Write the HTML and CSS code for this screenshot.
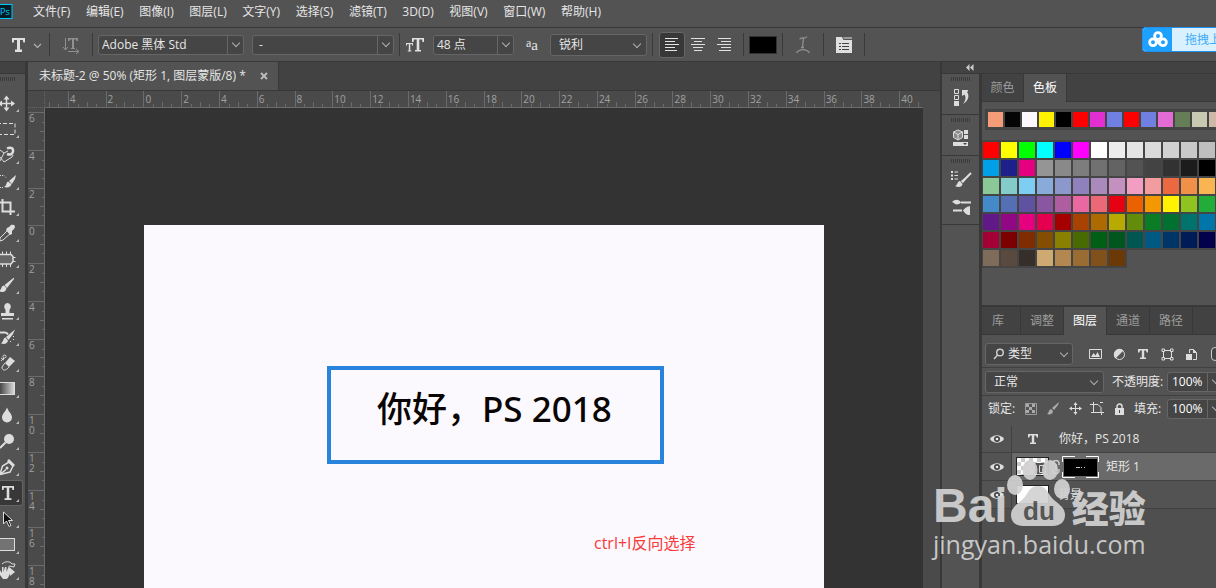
FILE: index.html
```html
<!DOCTYPE html>
<html lang="zh-CN">
<head>
<meta charset="utf-8">
<title>未标题-2</title>
<link rel="stylesheet" href="styles.css">
</head>
<body>
<div class="app">
  <header class="menubar">
    <svg class="logo" width="13" height="16" viewBox="0 0 13 16"><rect x="-6" y=".5" width="18" height="14" fill="#001d26" stroke="#00c8ff"/><text x="0" y="11" font-size="9" fill="#00c8ff" font-family="Open Sans, sans-serif">Ps</text></svg>
    <nav class="menus">
      <button>文件(F)</button><button>编辑(E)</button><button>图像(I)</button><button>图层(L)</button><button>文字(Y)</button><button>选择(S)</button><button>滤镜(T)</button><button>3D(D)</button><button>视图(V)</button><button>窗口(W)</button><button>帮助(H)</button>
    </nav>
  </header>

  <div class="options">
    <button class="preset" aria-label="文字工具"><svg width="40" height="24" viewBox="0 0 40 24"><path d="M3 5h13v4.500h-1.700l-.5-2.500h-2.800v9.500H13V19H6v-2.500h2V7H5.200l-.5 2.500H3z" fill="#e0e0e0"/><path d="M25 11l3.500 3.500L32 11" fill="none" stroke="#b0b0b0" stroke-width="1.200"/></svg></button>
    <i class="sep"></i>
    <button class="orient" aria-label="切换文本取向"><svg width="42" height="24" viewBox="0 0 42 24" fill="none" stroke="#909090"><path d="M15.500 5v12M13 14l2.500 3 2.500-3M18 18.500h11M26 16l3 2.500-3 2.500"/><path d="M18 5h10v3h-1.500l-.5-1.500h-2V15h1v1h-4v-1h1V6.500h-2L19.500 8H18z" fill="#909090" stroke="none"/></svg></button>
    <i class="sep"></i>
    <div class="combo combo-font"><input value="Adobe 黑体 Std" aria-label="字体"><button class="chev" aria-label="字体列表"></button></div>
    <div class="combo combo-style"><input value="-" aria-label="字体样式"><button class="chev" aria-label="样式列表"></button></div>
    <i class="sep"></i>
    <span class="size-icon"><svg width="18" height="14" viewBox="0 0 18 14" fill="#e0e0e0"><path d="M6 0h12v4h-1.500L16 1.500h-2.700V12H15v1.500H9V12h1.700V1.500H8L7.500 4H6z"/><path d="M0 5h7v2.500H6L5.800 6H4.300v6.500h1v1H1.800v-1h1V6H1.200L1 7.500H0z"/></svg></span>
    <div class="combo combo-size"><input value="48 点" aria-label="字号"><button class="chev" aria-label="字号列表"></button></div>
    <span class="aa-icon"><b>a</b><b class="low">a</b></span>
    <label class="pick pick-aa"><select aria-label="消除锯齿"><option>锐利</option></select></label>
    <i class="sep sep-aa"></i>
    <div class="aligns">
      <button class="on" aria-label="左对齐"><svg width="14" height="14" viewBox="0 0 14 14" stroke="#e4e4e4"><path d="M0 .5h13M0 3.500h10M0 6.500h14M0 9.500h10M0 12.500h12"/></svg></button>
      <button aria-label="居中对齐"><svg width="14" height="14" viewBox="0 0 14 14" stroke="#e0e0e0"><path d="M0 .5h14M3 3.500h8M0 6.500h14M2 9.500h10M3 12.500h8"/></svg></button>
      <button aria-label="右对齐"><svg width="14" height="14" viewBox="0 0 14 14" stroke="#e0e0e0"><path d="M1 .5h13M4 3.500h10M0 6.500h14M4 9.500h10M2 12.500h12"/></svg></button>
    </div>
    <i class="sep"></i>
    <button class="ink" aria-label="文本颜色"></button>
    <i class="sep"></i>
    <button class="opt-btn" aria-label="变形文字"><svg width="14" height="18" viewBox="0 0 14 18" fill="none" stroke="#909090" stroke-width="1.300"><path d="M4 3.500c0-2 2-1.500 4-1.500s2 0 3-1.500M7.500 2L6.500 11M5 11.500h3M.5 17c3-4.500 10-4.500 13 0"/></svg></button>
    <i class="sep"></i>
    <button class="opt-btn" aria-label="字符面板"><svg width="16" height="16" viewBox="0 0 16 16"><path d="M0 0h6l1.500 3H16v13H0z" fill="#e0e0e0"/><path d="M7 0h9v2H8z" fill="#999"/><path d="M3 6.500h2M6 6.500h7M3 9.500h2M6 9.500h7M3 12.500h2M6 12.500h7" stroke="#444"/></svg></button>
    <i class="sep"></i>
  </div>

  <main class="work">
    <aside class="tools">
      <div class="strip"></div>
      <div class="grip"></div>
      <button aria-label="移动"><svg viewBox="0 0 24 26"><path d="M6.500 7v13M0 13.500h14" class="l15"/><path d="M3.500 9.500l3-4 3 4zM3.500 17.500l3 4 3-4zM2 10.500l-4 3 4 3zM11 10.500l4 3-4 3z" class="f"/><path d="M19 19v3h-3z" class="c"/></svg></button>
      <button aria-label="选框"><svg viewBox="0 0 24 26"><path d="M-3 7.500h18v11H-3" class="l" stroke-dasharray="4 2"/><path d="M19 19v3h-3z" class="c"/></svg></button>
      <button aria-label="磁性套索"><svg viewBox="0 0 24 26"><path d="M0 8l4 3 4-2M4 11l-4 8M0 15l4 5 8-5 1-2" class="l"/><path d="M7 6.500c4-2 6.500 0 6 3s-3 3.500-6 2.500" fill="none" stroke="#ddd" stroke-width="2.500"/><path d="M19 19v3h-3z" class="c"/></svg></button>
      <button aria-label="快速选择"><svg viewBox="0 0 24 26"><path d="M0 7.500h4l2 2M0 19.500h4" class="l" stroke-dasharray="1 1"/><path d="M16 7l-7 6 3 3 3-5zM8 13.500c-2 1-1 4-4 5.500 4 1 7 0 7.500-3z" class="f"/><path d="M19 19v3h-3z" class="c"/></svg></button>
      <button aria-label="裁剪"><svg viewBox="0 0 24 26"><path d="M2.500 5v12.500H15M0 8.500h10.500V21" class="l2"/><path d="M19 19v3h-3z" class="c"/></svg></button>
      <button aria-label="吸管"><svg viewBox="0 0 24 26"><path d="M8 10L0 18v3l3-1 8-7" class="l"/><path d="M7 8l2-1 2-2c4-1 5 2 3 4l-2 2v3l-2 1-4-5z" class="f"/><path d="M19 19v3h-3z" class="c"/></svg></button>
      <button aria-label="修补"><svg viewBox="0 0 24 26"><path d="M0 8.500h11l2 2v5l-2 2.500H0" fill="#666" stroke="#ddd" stroke-width="1.500"/><path d="M2.500 5.500v3M6.500 5.500v3M10.500 5.500v3M2.500 18v3M6.500 18v3M10.500 18v3M13 11.500h2.500M13 15.500h2.500" class="l"/><path d="M19 19v3h-3z" class="c"/></svg></button>
      <button aria-label="画笔"><svg viewBox="0 0 24 26"><path d="M14 5.500L4.500 13 7 16l7-9zM4 13.500c-3 0-2 4-5 5.500 4 2 7 1 7.500-3z" class="f"/><path d="M19 19v3h-3z" class="c"/></svg></button>
      <button aria-label="图章"><svg viewBox="0 0 24 26"><path d="M7.500 5a3.500 3.500 0 013 5l-1 2v3H14v3H1v-3h4.500v-3l-1-2a3.500 3.500 0 013-5zM2 20h11v1.500H2z" class="f"/><path d="M19 19v3h-3z" class="c"/></svg></button>
      <button aria-label="历史记录画笔"><svg viewBox="0 0 24 26"><path d="M15 5.500L6 13l2.500 3L13 10zM5.500 13.500C3 14 4 17 1 19.500c4 1 6.500 0 7-3z" class="f"/><path d="M0 8.500h5c2 0 2 1 3 2" class="l2"/><path d="M13.500 12v1M13.500 15v1M10.500 17v1" class="l"/><path d="M19 19v3h-3z" class="c"/></svg></button>
      <button aria-label="橡皮擦"><svg viewBox="0 0 24 26"><path d="M10 7l5 4-6 6-4-4z" class="f"/><path d="M5 13l-3 4c0 4 4 4 7 0M1 8l3 2M1 11l3-3" class="l"/><circle cx="4.500" cy="6.500" r="1.500" class="l"/><path d="M19 19v3h-3z" class="c"/></svg></button>
      <button aria-label="渐变"><svg viewBox="0 0 24 26"><defs><linearGradient id="fade"><stop offset="0" stop-color="#333"/><stop offset="1" stop-color="#ddd"/></linearGradient></defs><rect x="-2" y="6.500" width="16.500" height="12" fill="url(#fade)" stroke="#ddd"/><path d="M19 19v3h-3z" class="c"/></svg></button>
      <button aria-label="模糊"><svg viewBox="0 0 24 26"><path d="M7 5.500c2 5 5 6.500 5 10a5 5 0 01-10 0c0-3.500 3-5 5-10z" class="f"/><path d="M19 19v3h-3z" class="c"/></svg></button>
      <button aria-label="减淡"><svg viewBox="0 0 24 26"><circle cx="9" cy="11" r="5" class="f"/><path d="M5.500 14.500L0 20" class="l2"/><path d="M19 19v3h-3z" class="c"/></svg></button>
      <button aria-label="钢笔"><svg viewBox="0 0 24 26"><path d="M0 20l2.500-8L9 8l4 4-3 6-10 2.500 6-5" class="l15"/><path d="M9 5l6 6-2 2-6-6z" class="f"/><circle cx="7" cy="14" r="1.500" class="f"/><path d="M19 19v3h-3z" class="c"/></svg></button>
      <button class="on" aria-label="文字"><svg viewBox="0 0 24 26"><path d="M2 6h12v4h-1.500L12 7.700H9.300v10.500H11.500V20H4.500v-1.800h2.200V7.700H4L3.500 10H2z" class="f"/><path d="M19 19v3h-3z" class="c"/></svg></button>
      <button aria-label="路径选择"><svg viewBox="0 0 24 26"><path d="M3.500 6v12l3-3 2.500 5.500 2-1L8.500 14.500h4z" fill="#111" stroke="#ddd"/><path d="M19 19v3h-3z" class="c"/></svg></button>
      <button aria-label="矩形"><svg viewBox="0 0 24 26"><rect x="-2" y="6.500" width="16.500" height="12" fill="#737373" stroke="#ddd"/><path d="M19 19v3h-3z" class="c"/></svg></button>
      <button aria-label="旋转视图"><svg viewBox="0 0 24 26"><path d="M2 6c3-3 8-3 10 0h3l-1 3-5-1" class="l"/><path d="M8 8l7 6-5 4zM0 12l2 3V9h1.500v5L5 9h1.500v5L8 10h1l.5 6c-1 4-2 5-4 5H3l-3-4z" class="f"/><path d="M19 19v3h-3z" class="c"/></svg></button>
    </aside>

    <section class="doc">
      <div class="tabbar"><div class="tab"><span>未标题-2 @ 50% (矩形 1, 图层蒙版/8) *</span><button class="close" aria-label="关闭"><svg width="8" height="8" viewBox="0 0 8 8"><path d="M1 1l6 6M7 1L1 7" stroke="#bbb" stroke-width="2"/></svg></button></div></div>
      <div class="stage">
        <div class="corner"></div>
        <div class="ruler-h"><div class="track-h" id="rulerH"></div></div>
        <div class="ruler-v"><div class="track-v" id="rulerV"></div></div>
        <div class="canvas">
          <div class="artboard">
            <div class="frame"><span>你好，PS 2018</span></div>
            <p class="note">ctrl+I反向选择</p>
          </div>
        </div>
        <div class="scroll"></div>
      </div>
    </section>

    <div class="right">
      <div class="strip strip-right"><svg width="8" height="7" viewBox="0 0 8 7" fill="#ccc"><path d="M3.500 0v7L0 3.500zM7.500 0v7L4 3.500z"/></svg></div>
      <div class="right-body">
        <div class="dock">
          <div class="dock-group"><div class="grip"></div><button aria-label="历史记录"><svg width="18" height="18" viewBox="0 0 18 18"><path d="M2.500 1.500h4v4h-4zM2.500 7.500h4v4h-4z" fill="none" stroke="#ddd"/><path d="M2 13h5v5H2z" fill="#ddd"/><path d="M10 2h6v1l-1 1c3 4 1 9-4 12 3-4 3-7 1.500-9.500L10 8z" fill="#ddd"/></svg></button></div>
          <div class="dock-group"><div class="grip"></div><button aria-label="属性"><svg width="18" height="18" viewBox="0 0 18 18"><path d="M6 1l4.500 2v5.500L6 11 1.500 8.500V3z" fill="#888" stroke="#ddd"/><path d="M1.500 3L6 5.500 10.500 3M6 5.500V11" fill="none" stroke="#ddd"/><path d="M12 1h4v4h-4zM12 6h4v4h-4zM1 13h15v4H1z" fill="#ddd"/><path d="M11 14h4l-2 2z" fill="#444"/></svg></button></div>
          <div class="dock-group"><div class="grip"></div><button aria-label="画笔设置"><svg width="22" height="18" viewBox="0 0 22 18"><path d="M1 1h2v2H1zM1 4.500h2v2H1zM1 8h2v2H1z" fill="#ddd"/><path d="M4.500 2H8M4.500 5.500H8M4.500 9H8" stroke="#ddd"/><path d="M21 3l-10 8 2 2zM10 11c-3 0-2 4-5 5 4 2 7 1 7.500-2z" fill="#ddd"/><path d="M21 3l-9 9" stroke="#ddd" stroke-width="2"/></svg></button><button aria-label="画笔预设"><svg width="22" height="18" viewBox="0 0 22 18" fill="#ddd"><path d="M11 3.500h10v2H11zM2 4c3-3 7-3 9 .5C9 7 5 7 4 5zM3 11.500h9v2H3zM20 8v9c-4 0-5-2-7-4.500C15 10 16 9 20 8z"/></svg></button></div>
        </div>
        <div class="panels">
          <section class="panel swatch-panel">
            <div class="ptabs"><button>颜色</button><button class="on">色板</button></div>
            <div class="recent" id="recent"></div>
            <div class="swatches" id="swatches"></div>
          </section>
          <section class="panel layers-panel">
            <div class="ptabs"><button>库</button><button>调整</button><button class="on">图层</button><button>通道</button><button>路径</button></div>
            <div class="prow">
              <label class="pick pick-kind"><svg width="12" height="12" viewBox="0 0 12 12" fill="none" stroke="#ccc" stroke-width="1.500"><circle cx="7" cy="4.500" r="3.300"/><path d="M4.500 7L1 11"/></svg><select aria-label="过滤类型"><option>类型</option></select></label>
              <div class="filters">
                <button aria-label="像素图层"><svg width="13" height="13" viewBox="0 0 13 13"><path d="M.5 1.500h12v9H.5z" fill="none" stroke="#ddd"/><path d="M2 9l2.500-4 2 2.500L8.500 4 11 9z" fill="#ddd"/></svg></button>
                <button aria-label="调整图层"><svg width="13" height="13" viewBox="0 0 13 13"><circle cx="6.500" cy="6.500" r="5" fill="none" stroke="#ddd"/><path d="M2.500 10.500A5.500 5.500 0 0110.500 2.500z" fill="#ddd"/></svg></button>
                <button aria-label="文字图层"><svg width="12" height="12" viewBox="0 0 12 12"><path d="M1 1h10v3.500H9.700L9 2.500H7.200v7H9V11H3V9.500h1.800v-7H3L2.300 4.500H1z" fill="#ddd"/></svg></button>
                <button aria-label="形状图层"><svg width="13" height="13" viewBox="0 0 13 13" fill="#535353" stroke="#ddd"><path d="M2.500 2.500h8v8h-8z"/><path d="M1 1h2.500v2.500H1zM9.500 1H12v2.500H9.500zM1 9.500h2.500V12H1zM9.500 9.500H12V12H9.500z"/></svg></button>
                <button aria-label="智能对象"><svg width="13" height="13" viewBox="0 0 13 13"><path d="M4.500 5V1.500h4l3 3v7H8" fill="none" stroke="#ddd"/><path d="M1 6h6v6H1zM8 1v4h4z" fill="#ddd"/></svg></button>
                <button aria-label="过滤开关"><i class="toggle"></i></button>
              </div>
            </div>
            <div class="prow">
              <label class="pick pick-blend"><select aria-label="混合模式"><option>正常</option></select></label>
              <label class="plabel" for="opacity">不透明度:</label>
              <div class="combo combo-pct"><input id="opacity" value="100%"><button class="chev" aria-label="不透明度滑块"></button></div>
            </div>
            <div class="prow prow-lock">
              <span class="lock-label">锁定:</span>
              <div class="locks">
                <button aria-label="锁定透明像素"><svg width="12" height="12" viewBox="0 0 12 12"><path d="M.5.500h11v11H.5z" fill="#555" stroke="#999"/><path d="M1 1h3v3H1zM7 1h3v3H7zM4 4h3v3H4zM1 7h3v3H1zM7 7h3v3H7z" fill="#aaa"/></svg></button>
                <button aria-label="锁定图像像素"><svg width="14" height="13" viewBox="0 0 14 13" fill="#aaa"><path d="M13 0L6 6l2 2 4-5zM5 7c-2 0-2 4-4 5 3 1 6 0 6-3z"/></svg></button>
                <button aria-label="锁定位置"><svg width="13" height="13" viewBox="0 0 13 13"><path d="M6.500 1v11M1 6.500h11" stroke="#ddd"/><path d="M4.500 3l2-3 2 3zM4.500 10l2 3 2-3zM3 4.500l-3 2 3 2zM10 4.500l3 2-3 2z" fill="#ddd"/></svg></button>
                <button aria-label="防止嵌套"><svg width="14" height="13" viewBox="0 0 14 13" fill="none" stroke="#ddd"><path d="M3.500 0v11M0 2.500h8l3 3V11M1 10.500h13M11.500 10v3M10 .5h3"/></svg></button>
                <button aria-label="全部锁定"><svg width="11" height="12" viewBox="0 0 11 12"><path d="M3 6V3.500a2.500 2.500 0 015 0V6" fill="none" stroke="#ddd" stroke-width="1.500"/><path d="M1 5h9v7H1z" fill="#ddd"/><path d="M5 7h1v3H5z" fill="#444"/></svg></button>
              </div>
              <label class="plabel" for="fill">填充:</label>
              <div class="combo combo-pct"><input id="fill" value="100%"><button class="chev" aria-label="填充滑块"></button></div>
            </div>
            <div class="layers">
              <div class="layer">
                <button class="eye" aria-label="可见性"><svg width="14" height="10" viewBox="0 0 14 10"><path d="M0 5c3-5 11-5 14 0-3 5-11 5-14 0z" fill="#ddd"/><circle cx="7" cy="5" r="3" fill="#444"/><circle cx="7" cy="5" r="1.300" fill="#eee"/></svg></button>
                <div class="lbody"><span class="ticon"><svg width="12" height="12" viewBox="0 0 12 12"><path d="M1 1h10v3.500H9.700L9 2.500H7.200v7H9V11H3V9.500h1.800v-7H3L2.300 4.500H1z" fill="#ddd"/></svg></span><span>你好，PS 2018</span></div>
              </div>
              <div class="layer active">
                <button class="eye" aria-label="可见性"><svg width="14" height="10" viewBox="0 0 14 10"><path d="M0 5c3-5 11-5 14 0-3 5-11 5-14 0z" fill="#ddd"/><circle cx="7" cy="5" r="3" fill="#444"/><circle cx="7" cy="5" r="1.300" fill="#eee"/></svg></button>
                <div class="lbody"><span class="thumb checker"><svg width="31" height="16" viewBox="0 0 31 16"><path d="M8 8h9v4H8z" fill="#fbd9c8"/><path d="M18 5h13v11H18z" fill="#555"/><path d="M22.500 7.500h6v7h-6z" fill="none" stroke="#ddd"/></svg></span><span class="chain"><svg width="8" height="14" viewBox="0 0 8 14" fill="none" stroke="#ccc" stroke-width="1.500"><path d="M1 5V3a3 2.500 0 016 0v2M1 9v2a3 2.500 0 006 0V9M4 4v6"/></svg></span><span class="mask"><svg width="37" height="24" viewBox="0 0 37 24"><path d="M2 4h33v17H2z" fill="#000"/><path d="M.5 7V1.500H13M24 1.500h12.500V7M36.500 17v5.500H24M13 22.500H.5V17" fill="none" stroke="#fff"/><path d="M14 12.500h4M19 12.500h1M22 12.500h1" stroke="#ccc"/></svg></span><span>矩形 1</span></div>
              </div>
              <div class="layer">
                <button class="eye" aria-label="可见性"><svg width="14" height="10" viewBox="0 0 14 10"><path d="M0 5c3-5 11-5 14 0-3 5-11 5-14 0z" fill="#ddd"/><circle cx="7" cy="5" r="3" fill="#444"/><circle cx="7" cy="5" r="1.300" fill="#eee"/></svg></button>
                <div class="lbody"><span class="thumb"></span><span class="bgname">背景</span></div>
              </div>
            </div>
          </section>
        </div>
      </div>
    </div>
  </main>

  <div class="upload">
    <span class="cloud"><svg width="20" height="17" viewBox="0 0 20 17" fill="none" stroke="#fff" stroke-width="2.800"><circle cx="10" cy="5" r="3.400"/><circle cx="5" cy="11.300" r="3.400"/><circle cx="15" cy="11.300" r="3.400"/><path d="M7.500 9l5 4.500"/></svg></span>
    <span class="drop">拖拽上传</span>
  </div>

  <div class="watermark">
    <div class="wm-top"><span class="wm-bai">Bai</span><svg class="paw" width="66" height="66" viewBox="0 0 66 66"><g fill="#d2d2d2"><ellipse cx="10" cy="25" rx="8" ry="10"/><ellipse cx="25" cy="10" rx="7.500" ry="10"/><ellipse cx="45" cy="10" rx="8" ry="10"/><ellipse cx="57" cy="29" rx="8" ry="10"/><path d="M33 26c8 0 9 6 14 12 6 6 13 9 13 17 0 7-5 11-12 11H18C11 66 6 62 6 55c0-8 7-11 13-17 5-6 6-12 14-12z"/></g><text x="34" y="60" text-anchor="middle" font-size="26" font-weight="700" font-family="Liberation Sans, sans-serif" fill="#575757">du</text></svg><span class="wm-cn">经验</span></div>
    <div class="wm-url">jingyan.baidu.com</div>
  </div>
</div>
<script src="main.js"></script>
</body>
</html>
```

FILE: styles.css
```css
* { box-sizing: border-box; }
body {
  margin: 0;
  overflow: hidden;
  background: #535353;
  color: #e6e6e6;
  font: 12px/16px "Open Sans", "Noto Sans CJK SC", sans-serif;
}
button, input, select {
  margin: 0;
  padding: 0;
  border: 0;
  border-radius: 0;
  background: none;
  color: inherit;
  font: inherit;
  outline: 0;
}
svg { display: block; flex: none; }
.app { position: relative; display: flex; flex-direction: column; height: 100vh; overflow: hidden; }

/* menu bar */
.menubar { display: flex; align-items: center; gap: 20px; flex: none; height: 28px; padding-bottom: 4px; border-bottom: 1px solid #383838; }
.menus { display: flex; justify-content: space-between; width: 568px; white-space: nowrap; }

/* options bar */
.options { display: flex; align-items: center; flex: none; height: 34px; padding-left: 9px; border-bottom: 1px solid #383838; }
.options > * { flex: none; }
.sep { width: 1px; height: 23px; background: #3a3a3a; }
.combo { display: flex; height: 20px; border: 1px solid #666; border-radius: 3px; background: #454545; }
.combo input { flex: 1; min-width: 0; padding-left: 3px; }
.chev { flex: none; width: 16px; border-left: 1px solid #666; }
.chev::after, .pick::after { content: ""; display: block; width: 5px; height: 5px; border: solid #b0b0b0; border-width: 0 1px 1px 0; transform: rotate(45deg); }
.chev::after { margin: -3px auto 0; }
.combo-font { width: 146px; margin: 0 8px 0 5px; }
.combo-style { width: 142px; margin-right: 5px; }
.combo-style input { padding-left: 6px; }
.combo-size { width: 81px; }
.size-icon { width: 33px; padding-left: 6px; }
.aa-icon { display: flex; width: 36px; height: 16px; padding-left: 12px; }
.aa-icon b { font: 12px/12px "Liberation Serif", serif; }
.aa-icon .low { padding-top: 2px; font-size: 15px; }
.pick { display: flex; align-items: center; height: 22px; padding: 0 6px 0 8px; border: 1px solid #666; border-radius: 3px; background: #454545; }
.pick select { flex: 1; min-width: 0; appearance: none; }
.pick::after { flex: none; margin-top: -2px; }
.pick-aa { width: 97px; margin-right: 5px; }
.sep-aa { margin-right: 6px; }
.aligns { display: flex; margin-right: 6px; }
.aligns button { display: grid; place-items: center; width: 26px; height: 26px; }
.aligns .on { border: 1px solid #666; border-radius: 3px; background: #383838; }
.ink { width: 28px; height: 18px; margin: 0 5px; border: 1px solid #333; background: #000; }
.opt-btn { display: grid; place-items: center; width: 40px; height: 24px; }

/* work area */
.work { display: flex; flex: 1; min-height: 0; background: #383838; }
.strip { flex: none; height: 12px; border-bottom: 1px solid #383838; background: #424242; }
.grip { height: 16px; background: repeating-linear-gradient(90deg, #3c3c3c 0 1px, transparent 1px 2px) 0 3px / 16px 4px no-repeat; }
.tools { display: flex; flex-direction: column; flex: none; width: 25px; margin-right: 3px; background: #535353; }
.tools button { flex: none; width: 23px; height: 26px; overflow: hidden; }
.tools .on { border: solid #646464; border-width: 1px 1px 1px 0; border-radius: 0 3px 3px 0; background: #383838; }
.tools svg { width: 24px; height: 26px; }
.tools .on svg { margin-top: -1px; }
.f { fill: #ddd; }
.c { fill: #bbb; }
.l { fill: none; stroke: #ddd; }
.l15 { fill: none; stroke: #ddd; stroke-width: 1.5; }
.l2 { fill: none; stroke: #ddd; stroke-width: 2; }

/* document */
.doc { display: flex; flex: 1; flex-direction: column; min-width: 0; }
.tabbar { display: flex; flex: none; height: 29px; border-bottom: 1px solid #383838; background: #424242; }
.tab { display: flex; align-items: center; justify-content: space-between; min-width: 251px; padding: 0 10px 0 11px; border-right: 1px solid #383838; background: #535353; white-space: nowrap; }
.stage { display: grid; flex: 1; grid-template: 17px minmax(0, 1fr) / 17px minmax(0, 1fr) 17px; min-height: 0; }
.corner { border: dotted #666; border-width: 0 1px 1px 0; background: #4a4a4a; }
.ruler-h { grid-column: 2; overflow: hidden; border-bottom: 1px solid #6b6b6b; background: #4a4a4a; }
.ruler-v { grid-area: 2 / 1; overflow: hidden; border-right: 1px solid #6b6b6b; background: #4a4a4a; }
.canvas { grid-area: 2 / 2; overflow: hidden; background: #333; }
.scroll { grid-area: 1 / 3 / 3 / 4; background: #4a4a4a; }
.track-h { display: grid; grid-template-columns: repeat(24, 1fr); width: 907px; height: 16px; margin-left: -15px; }
.track-v { display: grid; grid-template-rows: repeat(13, 1fr); height: 491px; margin-top: 4px; }
.track-h span, .track-v span { color: #a0a0a0; font-size: 10px; line-height: 10px; }
.track-h span {
  padding: 3px 0 0 1px;
  border-left: 1px solid #6b6b6b;
  background:
    linear-gradient(#6b6b6b, #6b6b6b) 25% 100% / 1px 3px no-repeat,
    linear-gradient(#6b6b6b, #6b6b6b) 50% 100% / 1px 5px no-repeat,
    linear-gradient(#6b6b6b, #6b6b6b) 75% 100% / 1px 3px no-repeat;
}
.track-v span {
  padding: 0 10px 0 1px;
  border-top: 1px solid #6b6b6b;
  word-break: break-all;
  background:
    linear-gradient(#6b6b6b, #6b6b6b) 100% 25% / 3px 1px no-repeat,
    linear-gradient(#6b6b6b, #6b6b6b) 100% 50% / 5px 1px no-repeat,
    linear-gradient(#6b6b6b, #6b6b6b) 100% 75% / 3px 1px no-repeat;
}
.artboard { width: 680px; height: 100%; margin: 117px 0 0 99px; padding-top: 141px; background: #fbf9fd; }
.frame { width: 337px; height: 98px; margin-left: 183px; padding: 14px 0 0 46px; border: 4px solid #2783dc; color: #0a0505; font: 500 35px/50px "Noto Sans", "Noto Sans CJK SC", sans-serif; white-space: nowrap; }
.note { margin: 69px 0 0 450px; color: #f93a3a; font-size: 16px; line-height: 20px; }

/* right side */
.right { display: flex; flex: none; flex-direction: column; width: 274px; margin-left: 2px; }
.strip-right { padding: 2px 0 0 24px; }
.right-body { display: flex; flex: 1; gap: 3px; min-height: 0; }
.dock { width: 37px; background: #535353; }
.dock-group { padding-bottom: 6px; border-bottom: 1px solid #383838; }
.dock-group .grip { height: 12px; margin-left: 9px; background-size: 20px 4px; }
.dock-group button { display: grid; place-items: center; width: 37px; height: 22px; }
.dock-group button + button { margin-top: 6px; }
.panels { display: flex; flex: 1; flex-direction: column; min-width: 0; gap: 2px; }
.panel { overflow: hidden; background: #535353; }
.swatch-panel { flex: none; height: 231px; }
.layers-panel { flex: 1; background: #4f4f4f; }
.ptabs { display: flex; height: 28px; background: #383838; box-shadow: inset 0 -1px #383838; }
.ptabs::after { content: ""; flex: 1; border-bottom: 1px solid #383838; background: #424242; }
.ptabs button { width: 42px; margin-right: 1px; border-bottom: 1px solid #383838; background: #424242; color: #9c9c9c; }
.ptabs button:first-child { width: 41px; }
.layers-panel .ptabs button:first-child { width: 38px; padding-right: 6px; }
.ptabs .on { border-bottom: 0; background: #535353; color: #fff; }
.recent { display: flex; gap: 2px; width: 100%; margin: 7px 0 12px 3px; padding: 2px; border: 1px solid #424242; background: #454545; overflow: hidden; }
.recent i { flex: none; width: 15px; height: 15px; }
.swatches { display: grid; grid-template-columns: repeat(13, 16px); gap: 2px; padding: 0 1px; }
.swatches i { height: 16px; box-shadow: 0 0 0 2px #454545; }
.prow { display: flex; align-items: center; height: 28px; padding-left: 3px; border-bottom: 1px solid #404040; background: #535353; white-space: nowrap; }
.prow > * { flex: none; }
.ptabs + .prow { height: 33px; padding-top: 6px; }
.pick-kind { gap: 3px; width: 88px; padding: 0 5px 0 7px; }
.filters, .locks { display: flex; }
.filters { margin-left: 10px; }
.filters button { display: grid; place-items: center; width: 24px; height: 20px; }
.toggle { width: 8px; height: 14px; border: 1px solid #ccc; border-radius: 4px; background: #444; }
.pick-blend { width: 119px; }
.plabel { width: 55px; margin-left: 8px; }
.combo-pct { width: 57px; }
.combo-pct input { padding-left: 4px; color: #fff; }
.prow-lock { height: 30px; padding-bottom: 5px; border-bottom: 0; }
.lock-label { width: 35px; padding-left: 3px; }
.locks button { display: grid; place-items: center; width: 22px; height: 20px; }
.prow-lock .plabel { width: 33px; margin-left: 4px; }
.layer { display: flex; height: 28px; border-bottom: 1px solid #424242; background: #535353; }
.layer:first-child { height: 27px; }
.eye { display: grid; place-items: center; width: 30px; border-right: 1px solid #404040; }
.lbody { display: flex; flex: 1; align-items: center; padding-left: 4px; white-space: nowrap; }
.active .lbody { background: #6a6a6a; }
.ticon { width: 43px; padding-left: 11px; }
.thumb { width: 33px; height: 19px; border: 1px solid #222; background: #fff; }
.checker { background: repeating-conic-gradient(#ccc 0 25%, #fff 0 50%) 0 0 / 8px 8px; }
.chain { padding: 0 2px 0 3px; }
.mask { margin-right: 7px; }
.bgname { padding-left: 9px; }

/* floating pieces */
.upload { position: absolute; top: 27px; right: 0; display: flex; width: 74px; height: 25px; border: 1px solid #1e90f0; border-right: 0; border-radius: 4px 0 0 4px; overflow: hidden; background: #d9f1fe; }
.cloud { display: grid; flex: none; place-items: center; width: 29px; background: #1ea0ff; }
.drop { padding-left: 13px; color: #41abf5; font-size: 12px; line-height: 23px; white-space: nowrap; }
.watermark { position: absolute; top: 460px; left: 933px; color: #d2d2d2; opacity: .92; white-space: nowrap; }
.wm-top { display: flex; align-items: flex-end; height: 66px; }
.wm-bai { font: 700 48px/40px "Liberation Sans", sans-serif; }
.paw { margin: 0 1px 0 -3px; }
.wm-cn { font: 900 37px/38px "Noto Sans CJK SC", sans-serif; }
.wm-url { font: 25px/36px "Open Sans", sans-serif; }
```

FILE: main.js
```js
function fill(id, items, make) {
  const host = document.getElementById(id);
  items.forEach(function (item) { host.appendChild(make(item)); });
}
function label(value) {
  const el = document.createElement('span');
  el.textContent = value;
  return el;
}
function chip(color) {
  const el = document.createElement('i');
  el.style.background = '#' + color;
  return el;
}

const across = [''];
for (let n = -4; n <= 40; n += 2) across.push(Math.abs(n));
fill('rulerH', across, label);

const down = [];
for (let n = -6; n <= 18; n += 2) down.push(Math.abs(n));
fill('rulerV', down, label);

fill('recent', 'f49b78 050505 fbf9fd fff100 000000 ff0000 e22fd0 7080e0 ff0000 7080e0 e26bd6 657e58 c7cab0 cdb8a8'.split(' '), chip);

fill('swatches', (
  'ff0000 ffff00 00ff00 00ffff 0000ff ff00ff ffffff ededed e4e4e4 dadada d1d1d1 c8c8c8 bebebe ' +
  '00a0e9 1d2088 e4007f 959595 898989 7d7d7d 717171 636363 535353 434343 323232 1c1c1c 000000 ' +
  '8ac997 84ccc9 7ecef4 88abda 8c97cb 8f82bc aa89bd c490bf f19ec2 f29c9f eb6841 f19149 f8b551 ' +
  '448aca 556fb5 5f52a0 8957a1 ae5da1 ea68a2 eb6877 e60012 eb6100 f39800 fff100 8fc31f 22ac38 ' +
  '601986 920783 e4007f e5004f a40000 a84200 ac6a00 b7aa00 638c0b 097c25 007130 00736d 0075a9 ' +
  'a40035 7d0000 7f2d00 834e00 8a8000 486a00 005e15 00561f 005752 005982 003567 001c58 03004c ' +
  '7e6b5a 59493f 362e2b cfa972 b28850 996c33 81511c 6a3906'
).split(' '), chip);
```
